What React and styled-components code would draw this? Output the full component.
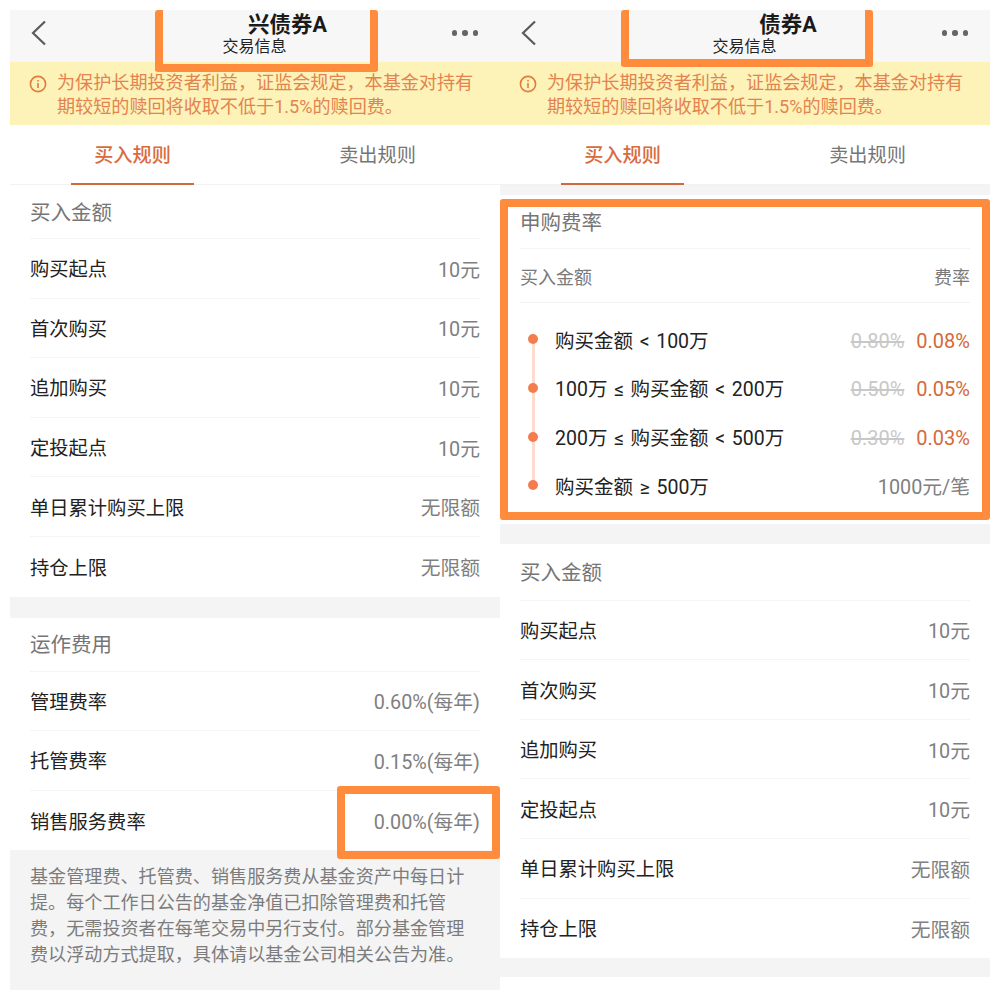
import React from "react";
import styled, { createGlobalStyle } from "styled-components";

const GlobalStyle = createGlobalStyle`
  html, body {
    margin: 0;
    padding: 0;
    background: #fff;
  }
  body {
    font-family: "Roboto", "Noto Sans CJK SC", sans-serif;
  }
`;

const Page = styled.div`
  display: flex;
  width: 980px;
  height: 980px;
  padding: 10px 10px;
  overflow: hidden;
`;

const Panel = styled.div`
  position: relative;
  width: 490px;
  height: 980px;
  display: flex;
  flex-direction: column;
  background: #fff;
`;

const Header = styled.div`
  height: 52px;
  flex: none;
  display: grid;
  grid-template-columns: 1fr auto 1fr;
  align-items: center;
  padding: 0 22px 0 21px;
  background: #f7f7f7;
`;

const BackIcon = styled.svg`
  width: 15px;
  height: 26px;
  margin-top: -7px;
  fill: none;
  stroke: #5a5a5a;
  stroke-width: 2.2;
`;

const HeaderTitles = styled.div`
  display: flex;
  flex-direction: column;
  align-items: center;
  margin-top: -5px;
`;

const FundName = styled.div`
  font-size: 21.5px;
  line-height: 27px;
  font-weight: 700;
  color: #1a1a1a;
  margin-left: ${(props) => props.$shift}px;
`;

const SubTitle = styled.div`
  font-size: 16px;
  line-height: 18px;
  color: #222;
`;

const MoreDots = styled.div`
  display: flex;
  justify-self: end;
  gap: 5px;
  margin-top: -6px;
  span {
    width: 5.5px;
    height: 5.5px;
    border-radius: 50%;
    background: #666;
  }
`;

const Banner = styled.div`
  height: 63px;
  flex: none;
  box-sizing: border-box;
  display: flex;
  padding: 9px 15px 0 19px;
  background: #fdf2b8;
  color: #e3834f;
  font-size: 18.1px;
  line-height: 24px;
`;

const InfoIcon = styled.svg`
  width: 18px;
  height: 18px;
  flex: none;
  margin: 4px 10px 0 0;
  fill: none;
  stroke: #e07c3e;
  stroke-width: 1.6;
`;

const Tabs = styled.div`
  height: 60px;
  flex: none;
  display: flex;
  border-bottom: 1px solid #f2f2f2;
  box-sizing: border-box;
`;

const Tab = styled.div`
  position: relative;
  flex: 1;
  display: flex;
  align-items: center;
  justify-content: center;
  padding-bottom: 2px;
  font-size: 19.2px;
  font-weight: ${(props) => (props.$active ? 500 : 400)};
  color: ${(props) => (props.$active ? "#d96b3c" : "#757575")};
  &::after {
    content: "";
    display: ${(props) => (props.$active ? "block" : "none")};
    position: absolute;
    bottom: -1px;
    left: 61px;
    width: 123px;
    height: 2px;
    background: #cf6a3f;
  }
`;

const Spacer = styled.div`
  height: ${(props) => props.$h}px;
  flex: none;
  background: #f4f4f4;
`;

const Section = styled.div`
  flex: none;
  padding: 0 20px;
  background: #fff;
`;

const SectionTitle = styled.div`
  height: ${(props) => props.$h || 54}px;
  box-sizing: border-box;
  display: flex;
  align-items: center;
  padding-bottom: 2px;
  border-bottom: 1px solid #f5f5f5;
  font-size: 20.5px;
  color: #757575;
`;

const Row = styled.div`
  height: 59.6px;
  box-sizing: border-box;
  display: flex;
  align-items: center;
  justify-content: space-between;
  border-bottom: 1px solid #f5f5f5;
  font-size: 19.3px;
  color: #222;
  &:last-child {
    border-bottom: none;
  }
`;

const RowValue = styled.span`
  font-size: 19.8px;
  color: #808080;
`;

const TableHead = styled.div`
  height: 54px;
  box-sizing: border-box;
  display: flex;
  align-items: center;
  justify-content: space-between;
  border-bottom: 1px solid #f2f2f2;
  font-size: 18px;
  color: #7a7a7a;
`;

const Tiers = styled.div`
  position: relative;
  padding: 13px 0;
`;

const Tier = styled.div`
  position: relative;
  height: 48.67px;
  box-sizing: border-box;
  display: flex;
  align-items: center;
  justify-content: space-between;
  padding: 0 0 2px 35px;
  font-size: 19.5px;
  word-spacing: 1.8px;
  color: #222;
  &::before {
    content: "";
    position: absolute;
    left: 12px;
    top: 50%;
    width: 2.5px;
    height: 100%;
    background: #fbdccf;
    display: ${(props) => (props.$last ? "none" : "block")};
  }
  &::after {
    content: "";
    position: absolute;
    left: 8px;
    top: 50%;
    width: 10px;
    height: 10px;
    margin-top: -6px;
    border-radius: 50%;
    background: #f47d4f;
  }
`;

const Prices = styled.div`
  display: flex;
  gap: 12px;
  padding-top: 3px;
  font-size: 20px;
`;

const OldRate = styled.span`
  color: #c8c8c8;
  text-decoration: line-through;
`;

const NewRate = styled.span`
  color: #d5693a;
`;

const Note = styled.div`
  flex: 1;
  padding: 14px 33px 0 20px;
  background: #f4f4f4;
  font-size: 18.1px;
  line-height: 26px;
  color: #7c7c7c;
`;

// orange annotation frames drawn over the screenshot
const Frame = styled.div`
  position: absolute;
  box-sizing: border-box;
  left: ${(props) => props.$x}px;
  top: ${(props) => props.$y}px;
  width: ${(props) => props.$w}px;
  height: ${(props) => props.$h}px;
  border: 8px solid #ff8c3d;
  border-top-width: ${(props) => (props.$open ? 0 : 8)}px;
  border-radius: 3px;
  pointer-events: none;
`;

const buyRows = [
  ["购买起点", "10元"],
  ["首次购买", "10元"],
  ["追加购买", "10元"],
  ["定投起点", "10元"],
  ["单日累计购买上限", "无限额"],
  ["持仓上限", "无限额"],
];

const feeRows = [
  ["管理费率", "0.60%(每年)"],
  ["托管费率", "0.15%(每年)"],
  ["销售服务费率", "0.00%(每年)"],
];

const tiers = [
  ["购买金额 < 100万", "0.80%", "0.08%"],
  ["100万 ≤ 购买金额 < 200万", "0.50%", "0.05%"],
  ["200万 ≤ 购买金额 < 500万", "0.30%", "0.03%"],
];

function Top({ name, shift }) {
  return (
    <>
      <Header>
        <BackIcon viewBox="0 0 15 26">
          <path d="M14 1.5 2 13l12 11.5" />
        </BackIcon>
        <HeaderTitles>
          <FundName $shift={shift}>{name}</FundName>
          <SubTitle>交易信息</SubTitle>
        </HeaderTitles>
        <MoreDots>
          <span />
          <span />
          <span />
        </MoreDots>
      </Header>
      <Banner>
        <InfoIcon viewBox="0 0 18 18">
          <circle cx="9" cy="9" r="7.6" />
          <path d="M9 8v5M9 5v1.6" />
        </InfoIcon>
        <div>
          为保护长期投资者利益，证监会规定，本基金对持有期较短的赎回将收取不低于1.5%的赎回费。
        </div>
      </Banner>
      <Tabs>
        <Tab $active>买入规则</Tab>
        <Tab>卖出规则</Tab>
      </Tabs>
    </>
  );
}

function InfoSection({ title, rows, titleHeight }) {
  return (
    <Section>
      <SectionTitle $h={titleHeight}>{title}</SectionTitle>
      {rows.map(([label, value]) => (
        <Row key={label}>
          <span>{label}</span>
          <RowValue>{value}</RowValue>
        </Row>
      ))}
    </Section>
  );
}

export default function App() {
  return (
    <Page>
      <GlobalStyle />
      <Panel>
        <Top name="兴债券A" shift={66} />
        <InfoSection title="买入金额" rows={buyRows} />
        <Spacer $h={21} />
        <InfoSection title="运作费用" rows={feeRows} />
        <Note>
          基金管理费、托管费、销售服务费从基金资产中每日计提。每个工作日公告的基金净值已扣除管理费和托管费，无需投资者在每笔交易中另行支付。部分基金管理费以浮动方式提取，具体请以基金公司相关公告为准。
        </Note>
        <Frame $open $x={145} $y={0} $w={223} $h={62} />
        <Frame $x={327} $y={776} $w={163} $h={73} />
      </Panel>
      <Panel>
        <Top name="债券A" shift={87} />
        <Spacer $h={10} />
        <Section>
          <SectionTitle>申购费率</SectionTitle>
          <TableHead>
            <span>买入金额</span>
            <span>费率</span>
          </TableHead>
          <Tiers>
            {tiers.map(([label, oldRate, newRate]) => (
              <Tier key={label}>
                <span>{label}</span>
                <Prices>
                  <OldRate>{oldRate}</OldRate>
                  <NewRate>{newRate}</NewRate>
                </Prices>
              </Tier>
            ))}
            <Tier $last>
              <span>购买金额 ≥ 500万</span>
              <RowValue>1000元/笔</RowValue>
            </Tier>
          </Tiers>
        </Section>
        <Spacer $h={20} />
        <InfoSection title="买入金额" rows={buyRows} titleHeight={57} />
        <Spacer $h={19} />
        <Frame $open $x={121} $y={0} $w={252} $h={57} />
        <Frame $x={0} $y={189} $w={490} $h={321} />
      </Panel>
    </Page>
  );
}
